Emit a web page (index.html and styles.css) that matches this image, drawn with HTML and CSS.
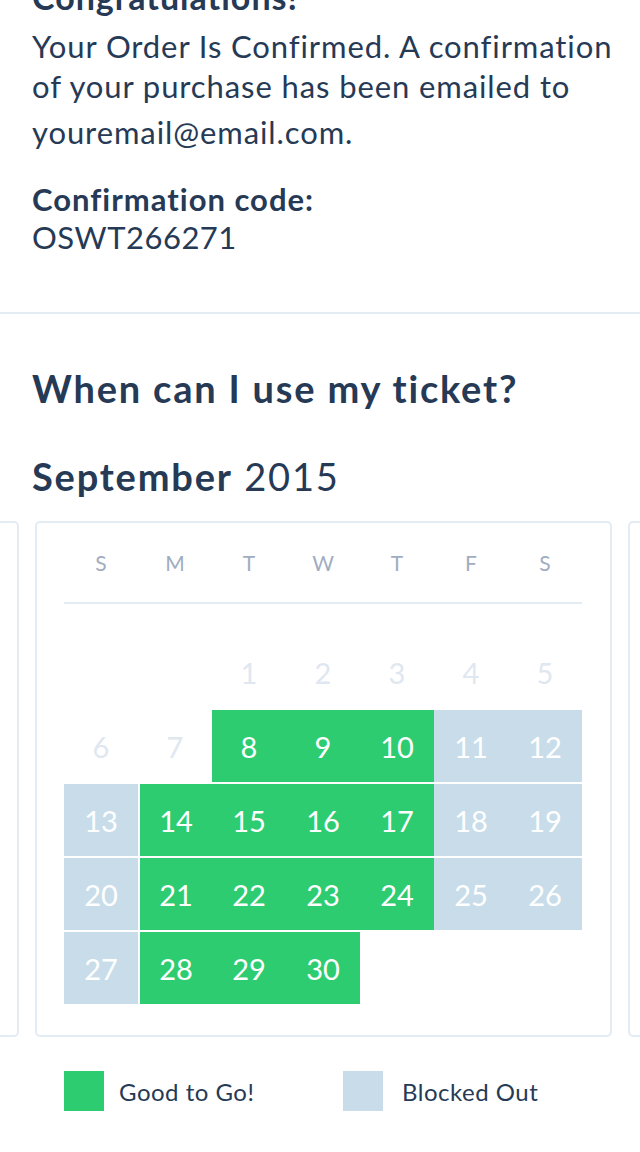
FILE: index.html
```html
<!DOCTYPE html>
<html lang="en">
<head>
    <meta charset="UTF-8">
    <meta name="viewport" content="width=device-width, initial-scale=1.0">
    <title>Order Confirmed</title>
    <link rel="stylesheet" href="styles.css">
</head>
<body>
    <main class="page">
        <!-- Confirmation Section -->
        <section class="confirm">
            <h1>Congratulations!</h1>
            <p class="confirm-text">Your Order Is Confirmed. A confirmation of your purchase has been emailed to <span class="email">youremail@email.com.</span></p>
            <h3>Confirmation code:</h3>
            <p class="code">OSWT266271</p>
        </section>

        <!-- Ticket Calendar Section -->
        <section class="ticket">
            <h2>When can I use my ticket?</h2>
            <div class="month"><strong>September</strong> 2015</div>

            <div class="carousel">
                <div class="track">
                    <div class="card"></div>
                    <div class="card">
                        <div class="weekdays">
                            <span>S</span><span>M</span><span>T</span><span>W</span><span>T</span><span>F</span><span>S</span>
                        </div>
                        <div class="days">
                            <div class="day"></div>
                            <div class="day"></div>
                            <div class="day off">1</div>
                            <div class="day off">2</div>
                            <div class="day off">3</div>
                            <div class="day off">4</div>
                            <div class="day off">5</div>

                            <div class="day off">6</div>
                            <div class="day off">7</div>
                            <div class="day good">8</div>
                            <div class="day good">9</div>
                            <div class="day good">10</div>
                            <div class="day blocked">11</div>
                            <div class="day blocked">12</div>

                            <div class="day blocked">13</div>
                            <div class="day good edge">14</div>
                            <div class="day good">15</div>
                            <div class="day good">16</div>
                            <div class="day good">17</div>
                            <div class="day blocked">18</div>
                            <div class="day blocked">19</div>

                            <div class="day blocked">20</div>
                            <div class="day good edge">21</div>
                            <div class="day good">22</div>
                            <div class="day good">23</div>
                            <div class="day good">24</div>
                            <div class="day blocked">25</div>
                            <div class="day blocked">26</div>

                            <div class="day blocked">27</div>
                            <div class="day good edge">28</div>
                            <div class="day good">29</div>
                            <div class="day good">30</div>
                        </div>
                    </div>
                    <div class="card"></div>
                </div>
            </div>

            <!-- Legend -->
            <div class="legend">
                <div class="legend-item"><span class="swatch good"></span>Good to Go!</div>
                <div class="legend-item"><span class="swatch blocked"></span>Blocked Out</div>
            </div>
        </section>
    </main>
</body>
</html>
```

FILE: styles.css
```css
body {
    font-family: Lato, "Open Sans", sans-serif;
    margin: 0;
    padding: 0;
    background-color: #fff;
    color: #263a56;
    overflow: hidden;
}
.page {
    margin-top: -23px;
}
.confirm {
    padding: 0 20px 56px 32px;
    border-bottom: 2px solid #e3ebf3;
}
.confirm h1 {
    margin: 0 0 9px;
    font-size: 34px;
    line-height: 40px;
    font-weight: 700;
    letter-spacing: 1px;
}
.confirm-text {
    margin: 0;
    font-size: 31px;
    line-height: 40px;
    letter-spacing: 0.9px;
}
.email {
    display: block;
    margin-top: 6px;
}
.confirm h3 {
    margin: 28px 0 0;
    font-size: 31px;
    line-height: 38px;
    font-weight: 700;
    letter-spacing: 1px;
}
.code {
    margin: 0;
    font-size: 31px;
    line-height: 38px;
    letter-spacing: 0.5px;
}
.ticket {
    padding-top: 53px;
}
.ticket h2 {
    margin: 0 32px;
    font-size: 38px;
    line-height: 42px;
    font-weight: 700;
    letter-spacing: 1.8px;
}
.month {
    margin: 46px 32px 0;
    font-size: 38px;
    line-height: 42px;
    letter-spacing: 1.8px;
}
.month strong {
    font-weight: 700;
}
.carousel {
    margin-top: 24px;
    overflow: hidden;
}
.track {
    display: flex;
    gap: 16px;
    margin-left: -558px;
}
.card {
    flex: 0 0 577px;
    box-sizing: border-box;
    height: 516px;
    border: 2px solid #e3ebf3;
    border-radius: 5px;
    padding: 0 28px 0 27px;
}
.weekdays {
    display: grid;
    grid-template-columns: repeat(7, 1fr);
    height: 79px;
    align-items: center;
    border-bottom: 2px solid #e3ebf3;
    font-size: 21px;
    color: #9fadc0;
    text-align: center;
}
.days {
    display: grid;
    grid-template-columns: repeat(7, 1fr);
    grid-auto-rows: 72px;
    row-gap: 2px;
    margin-top: 32px;
}
.day {
    box-sizing: border-box;
    display: flex;
    align-items: center;
    justify-content: center;
    font-size: 29px;
    color: #fff;
}
.day.off {
    color: #dfe7f1;
}
.good {
    background-color: #2ecc71;
}
.blocked {
    background-color: #c8dde9;
}
.day.edge {
    border-left: 2px solid #fff;
}
.legend {
    display: flex;
    margin: 34px 0 0 64px;
}
.legend-item {
    flex: none;
    display: flex;
    align-items: center;
    width: 279px;
    font-size: 24px;
    letter-spacing: 0.5px;
}
.swatch {
    flex: none;
    width: 40px;
    height: 40px;
    margin-right: 15px;
}
.legend-item:last-child .swatch {
    margin-right: 19px;
}
```
